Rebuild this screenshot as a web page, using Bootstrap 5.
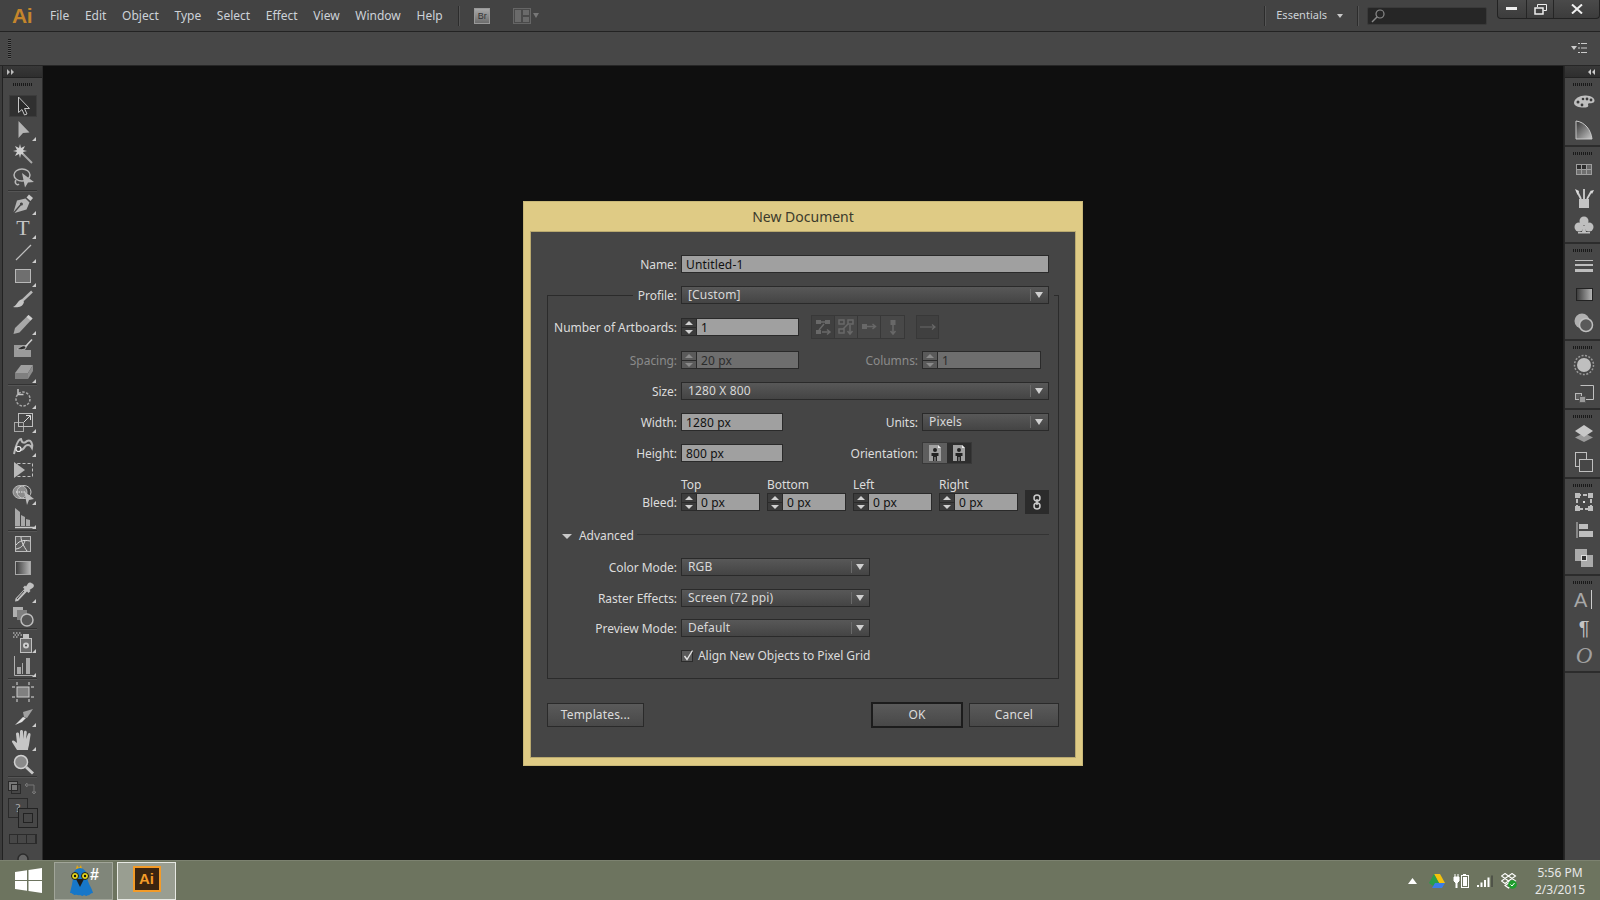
<!DOCTYPE html>
<html lang="en">
<head>
<meta charset="UTF-8">
<title>Adobe Illustrator - New Document</title>
<link href="https://cdn.jsdelivr.net/npm/bootstrap@5.3.0/dist/css/bootstrap.min.css" rel="stylesheet">
<style>
    html, body { height: 900px; overflow: hidden; }
    body { width: 1600px; background: #0f0f0f; font-family: "Noto Sans", sans-serif; font-size: 12px; color: #d0d0d0; position: relative; }

    .menubar { height: 32px; background: #434343; border-bottom: 1px solid #232323; position: relative; }
    .ai-logo { width: 50px; font: bold 21px "Liberation Sans", sans-serif; color: #c4852c; padding-left: 12px; letter-spacing: -.5px; }
    .menu-item { color: #cdd2d8; margin-right: 15.7px; line-height: 30px; }
    .vsep { width: 2px; height: 20px; background: #2c2c2c; border-right: 1px solid #555; }
    .br-ico { width: 16px; height: 16px; background: linear-gradient(#a8a8a8, #6c6c6c); border: 1px solid #999; color: #333; font: 9px "Liberation Sans", sans-serif; text-align: center; line-height: 14px; margin: 0 23px 0 14px; }
    .essentials { color: #cdd2d8; font-size: 11px; margin: 0 10px 0 10px; }
    .ess-caret { margin-right: 14px; }
    .search-box { width: 120px; height: 18px; background: #262626; border: 1px solid #3a3a3a; border-radius: 2px; margin: 0 10px 0 8px; padding-left: 3px; }
    .win-btns { width: 103px; height: 19px; background: linear-gradient(#4a4a4a, #3c3c3c); border: 1px solid #222; border-top: 0; border-radius: 0 0 4px 4px; margin: 0 0 12px 0; }
    .win-btns > div { height: 100%; border-left: 1px solid #252525; }
    .win-btns > div:first-child { border-left: 0; }
    .win-min { width: 28px; }
    .win-max { width: 27px; }
    .ctrlbar { height: 34px; background: #474747; border-bottom: 1px solid #262626; padding: 0 13px 0 8px; }
    .grip-v { width: 3px; height: 20px; background: repeating-linear-gradient(#191919 0 1px, #5a5a5a 1px 2px); }
    .grip-h { width: 19px; height: 3px; background: repeating-linear-gradient(90deg, #191919 0 1px, #474747 1px 2px); margin: 5px auto 0; }

    .workspace { height: 794px; }
    .edge-left { width: 3px; background: #3b3b3b; border-right: 1px solid #222; }
    .tool-panel { width: 40px; background: #474747; border-right: 1px solid #2b2b2b; overflow: hidden; }
    .panel-head { height: 12px; background: linear-gradient(#383838, #2e2e2e); border-bottom: 1px solid #222; color: #bbb; }
    .tool { height: 24px; width: 39px; display: flex; justify-content: center; align-items: center; position: relative; }
    .tool-on { background: #303030; border: 1px solid #3c3c3c; width: 28px; height: 22px; margin: 9px auto 1px; }
    .tool.more::after { content: ""; position: absolute; right: 6px; bottom: 1px; border: 2px solid transparent; border-right-color: #ccc; border-bottom-color: #ccc; }
    .tool-sep { background: #333; border-bottom: 1px solid #555; margin: 0 5px; box-sizing: content-box; height: 1px; }
    .swatches { height: 20px; padding: 0 5px; }
    .fillstroke { height: 32px; position: relative; margin: 0 5px; }
    .fill-box { width: 20px; height: 20px; border: 1px solid #2a2a2a; position: absolute; left: 0; top: 0; color: #aaa; font-size: 11px; line-height: 18px; text-align: center; }
    .stroke-box { width: 20px; height: 20px; border: 1px solid #222; position: absolute; left: 10px; top: 10px; background: #474747; }
    .stroke-box::after { content: ""; position: absolute; left: 4px; top: 4px; width: 10px; height: 10px; border: 1px solid #222; }
    .modes { width: 28px; height: 10px; margin: 4px auto 0; border: 1px solid #2b2b2b; display: flex; }
    .modes i { flex: 1; border-right: 1px solid #2b2b2b; }
    .draw-behind { display: block; margin: 9px auto 0; }
    .right-panel { width: 36px; background: #474747; border-left: 1px solid #262626; }
    .pgroup { border-bottom: 2px solid #2c2c2c; }
    .pg2 { padding-bottom: 1px; }
    .pg2 .grip-h { margin-bottom: 2px; }
    .pg3 { padding-bottom: 2px; }
    .pg3 .grip-h { margin-bottom: 1px; }
    .rtool { height: 28px; display: flex; justify-content: center; align-items: center; padding-left: 3px; }
    .canvas-edge { width: 1px; background: #202020; }

    .taskbar { height: 40px; background: #6d745f; border-top: 1px solid #7c8270; }
    .win-logo { margin: 0 12px 0 15px; }
    .task-btn { width: 59px; height: 38px; background: #80867a; border: 1px solid #a1a599; margin-right: 4px; }
    .task-btn.task-on { background: #999e91; border-color: #e6e8e2; }
    .ai-task { width: 28px; height: 26px; background: #3b2410; border: 2px solid #f39b28; color: #f39b28; font: bold 15px "Liberation Sans", sans-serif; text-align: center; line-height: 22px; margin-bottom: 3px; }
    .clock { width: 80px; text-align: center; color: #e8e8e8; font-size: 12px; line-height: 17px; }
    .tray-svg { margin-right: 8px; }
    .tray-arrow { margin-right: 12px; }
    .tray-last { margin-right: 3px; }

    .dlg { position: absolute; left: 523px; top: 201px; width: 560px; height: 565px; background: #dfcb85; border: 1px solid #c9b878; padding: 0 6px 6px; }
    .dlg-title { height: 29px; line-height: 30px; text-align: center; color: #3c3a2c; font-size: 14px; }
    .dlg-body { height: 527px; background: #454545; border: 1px solid #b9a96f; padding: 23px 16px 0; font-family: "Noto Sans", sans-serif; color: #dcdcdc; letter-spacing: -.05px; }
    .frow { height: 18px; display: flex; align-items: center; }
    .lbl { width: 130px; text-align: right; margin-right: 4px; white-space: nowrap; flex: none; padding-top: 2px; }
    .fset .lbl { width: 129px; }
    .fset .lbl.lbl-auto { width: auto; margin-left: auto; }
    .dim { color: #8b8b8b; }
    .dlg .form-control { height: 18px; min-height: 0; background: #a0a0a0; border: 1px solid #2a2a2a; border-radius: 0; padding: 0 4px; font-size: 12px; color: #111; line-height: 16px; box-shadow: none; letter-spacing: .15px; font-family: "Noto Sans", sans-serif; }
    .dlg .form-control:disabled { background: #6e6e6e; color: #2c2c2c; opacity: 1; }
    .w-name { width: 368px; }
    .dlg .w-dim { width: 102px; }
    .sel { height: 18px; background: linear-gradient(#585858, #444); border: 1px solid #2a2a2a; color: #d8d8d8; display: flex; padding-left: 6px; align-items: center; }
    .sel span { flex-grow: 1; letter-spacing: .15px; }
    .sel b { width: 17px; height: 12px; border-left: 1px solid #6a6a6a; position: relative; margin-right: 1px; }
    .sel b::after { content: ""; position: absolute; left: 4px; top: 3px; border: 4px solid transparent; border-top: 6px solid #d0d0d0; border-bottom: 0; }
    .sel-full { width: 368px; }
    .sel-short { width: 127px; }
    .sel-mid { width: 189px; }
    .spin { display: flex; height: 18px; }
    .spin-btn { width: 15px; flex: none; background: #3c3c3c; border: 1px solid #2a2a2a; border-right: 0; display: flex; flex-direction: column; }
    .spin-btn i { flex: 1; position: relative; display: block; }
    .spin-btn i + i { border-top: 1px solid #2a2a2a; }
    .spin-btn i::after { content: ""; position: absolute; left: 3px; top: 2px; border: 4px solid transparent; border-bottom: 4px solid #d0d0d0; border-top: 0; }
    .spin-btn i + i::after { border-top: 4px solid #d0d0d0; border-bottom: 0; }
    .spin-off .spin-btn { background: #5a5a5a; }
    .spin-off .spin-btn i::after { border-bottom-color: #8a8a8a; border-top-color: #8a8a8a; }
    .spin .form-control { width: 103px; }
    .spin-small .form-control { width: 64px; }
    .spin-col { width: 119px; }
    .spin-col .form-control { width: 104px; }
    .arr-group { display: flex; border: 1px solid #383838; margin-left: 12px; height: 24px; }
    .arr-group div { width: 23px; border-right: 1px solid #383838; background: #484848; display: flex; align-items: center; justify-content: center; }
    .arr-group div:last-child { border-right: 0; }
    .arr-group div:first-child { background: #404040; }
    .arr-single { margin-left: 11px; }
    .arr-single div { width: 21px; }

    .fset { border: 1px solid #2b2b2b; height: 384px; margin-top: 22px; padding-right: 9px; }
    .profile-row { margin-top: -10px; margin-left: 85px; background: #454545; padding-right: 5px; padding-left: 4px; width: max-content; }
    .fset .profile-row .lbl { width: 40px; }
    .mt-12 { margin-top: 12px; }
    .mt-14 { margin-top: 14px; }
    .mt-15 { margin-top: 15px; }
    .mt-13 { margin-top: 13px; }
    .orient { display: flex; height: 22px; border: 1px solid #383838; width: 50px; }
    .orient div { width: 24px; display: flex; align-items: center; justify-content: center; background: #5e5e5e; }
    .orient div + div { background: #2d2d2d; }
    .orient-gap { width: 77px; }
    .bleed-heads { padding-left: 133px; height: 14px; margin-top: 16px; line-height: 14px; }
    .bleed-heads span { width: 86px; display: block; flex: none; }
    .bleed-row { height: 24px; margin-top: -2px; }
    .bleed-row .spin { margin-right: 7px; }
    .link-btn { width: 24px; height: 24px; background: #2b2b2b; display: flex; align-items: center; justify-content: center; }
    .adv-row { margin-top: 13px; padding-left: 14px; height: 18px; }
    .adv-row i { border: 5px solid transparent; border-top: 5px solid #c8c8c8; border-bottom: 0; margin-right: 7px; }
    .adv-row hr { flex-grow: 1; margin: 0 0 3px 3px; border: 0; border-top: 1px solid #333; opacity: 1; }
    .chk-row { margin-top: 10px; margin-left: 133px; }
    .chk { width: 12px; height: 12px; background: #5a5a5a; border: 1px solid #2b2b2b; margin-right: 5px; position: relative; }
    .chk svg { position: absolute; left: 0; top: -2px; }
    .dlg-foot { margin-top: 24px; }
    .dlg .btn { height: 24px; background: linear-gradient(#5a5a5a, #484848); border: 1px solid #2a2a2a; border-radius: 0; color: #dcdcdc; font-size: 12px; padding: 0; line-height: 22px; letter-spacing: .15px; }
    .btn-tpl { width: 97px; }
    .dlg .btn-ok { width: 92px; height: 26px; border: 2px solid #1c1c1c; margin-top: -1px; margin-right: 6px; }
    .btn-can { width: 90px; }
</style>
</head>
<body>
<svg width="0" height="0" class="position-absolute">
    <defs>
        <linearGradient id="gr"><stop offset="0" stop-color="#3a3a3a"/><stop offset="1" stop-color="#b8b8b8"/></linearGradient>
        <linearGradient id="wedge" x1="0" y1="0" x2="1" y2="1"><stop offset="0" stop-color="#333"/><stop offset="1" stop-color="#c8c8c8"/></linearGradient>
        <symbol id="t-sel" viewBox="0 0 24 24"><path d="M7.5 3v15.5l3.5-3 2.5 5.5 2.5-1-2.5-5.500h5z" fill="#2a2a2a" stroke="#c6c6c6"/></symbol>
        <symbol id="t-dir" viewBox="0 0 24 24"><path d="M7.500 3v17l4.500-5 6.500-.5z" fill="#b4b4b4"/></symbol>
        <symbol id="t-wand" viewBox="0 0 24 24"><path d="M9 2l1 4 4-2-2 4 4 1-4 1 2 4-4-2-1 4-1-4-4 2 2-4-4-1 4-1-2-4 4 2z" fill="#cfcfcf"/><path d="M12 12l9 9" stroke="#a8a8a8" stroke-width="2"/></symbol>
        <symbol id="t-lasso" viewBox="0 0 24 24"><ellipse cx="11" cy="9" rx="8" ry="6" fill="none" stroke="#b8b8b8" stroke-width="1.500"/><path d="M5 14c-2 3 1 6 3 4" fill="none" stroke="#b8b8b8" stroke-width="1.500"/><path d="M11 7l12 9-6 .5-3 5z" fill="#b8b8b8"/></symbol>
        <symbol id="t-pen" viewBox="0 0 24 24"><path d="M18 2.500l4 3.500-2.500 3-4-3.500z" fill="#c8c8c8"/><path d="M14.500 6.500l4 4-3 7-12 3.500 6.500-7.500a1.500 1.500 0 1 0-1-1l-6.500 7.500 3.500-11.500z" fill="#b4b4b4"/></symbol>
        <symbol id="t-line" viewBox="0 0 24 24"><path d="M5 20L20 5" stroke="#c0c0c0" stroke-width="1.200"/></symbol>
        <symbol id="t-rect" viewBox="0 0 24 24"><rect x="4.500" y="5.500" width="15" height="13" fill="#6f6f6f" stroke="#b8b8b8"/></symbol>
        <symbol id="t-brush" viewBox="0 0 24 24"><path d="M21 3.500L11 13" stroke="#b8b8b8" stroke-width="2.500"/><path d="M11 11.500c-4 0-5 6-9 7.500 4 1 10 0 11-5z" fill="#c4c4c4"/></symbol>
        <symbol id="t-pencil" viewBox="0 0 24 24"><path d="M17.500 3l4 3.500-13 14-6 1.500 1.500-6z" fill="#a8a8a8"/><path d="M17.500 3l4 3.500-2 2-4-3.500z" fill="#d0d0d0"/></symbol>
        <symbol id="t-blob" viewBox="0 0 24 24"><path d="M3 9h14l-3 5h6v7H3z" fill="#9a9a9a"/><path d="M21 3.500L14 11" stroke="#d0d0d0" stroke-width="1.500"/><path d="M14 10c-3-1-5 2-8 3 3 1 7 1 9-1z" fill="#2c2c2c" stroke="#ccc" stroke-width=".6"/></symbol>
        <symbol id="t-eraser" viewBox="0 0 24 24"><path d="M10 5h12l-5 8H4z" fill="#9f9f9f"/><path d="M4 13h13v6H4z" fill="#7f7f7f"/><path d="M17 13l5-8v6l-5 8z" fill="#8c8c8c"/></symbol>
        <symbol id="t-rot" viewBox="0 0 24 24"><circle cx="12" cy="13" r="7" fill="none" stroke="#a8a8a8" stroke-width="1.500" stroke-dasharray="2.500 1.500"/><path d="M7 3v5.500h5.500" fill="none" stroke="#c4c4c4" stroke-width="1.500"/></symbol>
        <symbol id="t-scale" viewBox="0 0 24 24"><rect x="3.500" y="12.500" width="9" height="9" fill="#4a4a4a" stroke="#a8a8a8"/><rect x="7.500" y="3.500" width="14" height="13" fill="none" stroke="#bdbdbd"/><path d="M13 12l6-6M15 5.500h4.500V10" fill="none" stroke="#ddd"/></symbol>
        <symbol id="t-warp" viewBox="0 0 24 24"><path d="M3 20c2-9 4-15 7-15 1 5 4 4 6 2 4-2 6 3 5 7-2-4-6-4-8 0-1 2-3 2-5 2" fill="none" stroke="#b8b8b8" stroke-width="2"/><circle cx="7.500" cy="15" r="2.500" fill="#454545" stroke="#eee" stroke-width="1.200"/></symbol>
        <symbol id="t-free" viewBox="0 0 24 24"><rect x="6.500" y="5.500" width="15" height="13" fill="none" stroke="#c0c0c0" stroke-dasharray="3 2"/><path d="M3 4l11 8-11 8z" fill="#b8b8b8"/></symbol>
        <symbol id="t-shape" viewBox="0 0 24 24"><ellipse cx="9" cy="10" rx="7" ry="6.500" fill="#8c8c8c" stroke="#b8b8b8"/><ellipse cx="13" cy="10" rx="7" ry="6.500" fill="none" stroke="#c8c8c8"/><path d="M5 10h9" stroke="#eee" stroke-dasharray="1.500 1"/><path d="M13 9l10 8-5 1-2 5z" fill="#bcbcbc"/></symbol>
        <symbol id="t-persp" viewBox="0 0 24 24"><path d="M4 2l5 4v14H4zM10 9l4 2v9h-4zM15 13l4 1v6h-4z" fill="#a8a8a8"/><path d="M4 21.500h19" stroke="#ccc" stroke-width="1.500"/></symbol>
        <symbol id="t-mesh" viewBox="0 0 24 24"><rect x="4.500" y="4.500" width="15" height="15" fill="#5e5e5e" stroke="#bbb"/><path d="M5 13c4-5 8-5 14-4M5 17c5-1 7-3 9-8M10 5c0 4 3 10 6 14" fill="none" stroke="#ddd"/></symbol>
        <symbol id="t-grad" viewBox="0 0 24 24"><rect x="4.500" y="5.500" width="15" height="13" fill="url(#gr)" stroke="#a8a8a8"/></symbol>
        <symbol id="t-drop" viewBox="0 0 24 24"><path d="M21 3.500a2.500 2.500 0 0 0-4 0l-2 3-1-1-2 2 1.500 1.500-9 9.500-.5 3 3-.5 9-9.500 1.500 1.500 2-2-1-1 3-2a2.500 2.500 0 0 0 0-4.500z" fill="#c0c0c0"/><path d="M13 11l-7 8" stroke="#454545"/></symbol>
        <symbol id="t-blend" viewBox="0 0 24 24"><rect x="2" y="3" width="10" height="10" fill="#b0b0b0"/><rect x="6" y="6" width="10" height="10" fill="#808080"/><circle cx="16" cy="16" r="6" fill="#555" stroke="#bdbdbd" stroke-width="1.500"/></symbol>
        <symbol id="t-sym" viewBox="0 0 24 24"><rect x="9.500" y="8.500" width="11" height="14" fill="#6a6a6a" stroke="#c0c0c0"/><rect x="12" y="4" width="6" height="4" fill="#c0c0c0"/><circle cx="15" cy="15.500" r="3" fill="#ccc"/><circle cx="15" cy="15.500" r="1" fill="#444"/><path d="M2 3h1.500M5 3h1.500M8 3h1.500M3.500 5H5M6.500 5H8M9.500 5H11M2 7h1.500M5 7h1.500" stroke="#ddd"/></symbol>
        <symbol id="t-graph" viewBox="0 0 24 24"><path d="M3.500 2v19.500h19" fill="none" stroke="#b0b0b0"/><path d="M6 13h4v7H6zM11 9h1v11h-1zM15 4h4v16h-4z" fill="#a8a8a8"/></symbol>
        <symbol id="t-board" viewBox="0 0 24 24"><rect x="6" y="7" width="12" height="10" fill="#808080" stroke="#ccc"/><path d="M6 2v3M18 2v3M6 19v3M18 19v3M1 7h3M20 7h3M1 17h3M20 17h3" stroke="#ddd"/></symbol>
        <symbol id="t-slice" viewBox="0 0 24 24"><path d="M4 21l8-8 3 1-4 4z" fill="#e0e0e0"/><path d="M12 8l10-3-6 9-3-1z" fill="#a0a0a0"/></symbol>
        <symbol id="t-hand" viewBox="0 0 24 24"><path d="M6 22l-5-8c-.5-1.500 1.500-2 2.500-1L6 15 5 6c0-2 2.500-2 3-.5L9 11V3.500c0-2 3-2 3 0V11l1-7c.3-2 3-1.500 2.800.500L15 11l2-5c.7-2 3-1 2.500 1L18 17c-.3 2-1 3-1 5z" fill="#c6c6c6"/></symbol>
        <symbol id="t-zoom" viewBox="0 0 24 24"><circle cx="10" cy="10" r="6.500" fill="#8a8a8a" stroke="#d0d0d0" stroke-width="1.500"/><path d="M15 15l7 6.500" stroke="#c8c8c8" stroke-width="3"/></symbol>

        <symbol id="r-palette" viewBox="0 0 24 24"><path d="M2 13c0-5 7-8 12-7.500 5 .3 9 2.500 8.500 5.500-.5 2.500-4 2-6 2.500-1.500.5 1 2.500-1 3.500-4 1.500-13.500 0-13.500-4z" fill="#bfbfbf"/><g fill="#3b3b3b"><circle cx="6" cy="12" r="1.500"/><circle cx="10" cy="15" r="1.400"/><circle cx="15" cy="9" r="1.400"/><circle cx="19" cy="10" r="1.400"/><circle cx="11" cy="9" r="1.300"/></g></symbol>
        <symbol id="r-wedge" viewBox="0 0 24 24"><path d="M4 3c9 1 15 9 16 18H4z" fill="url(#wedge)" stroke="#c8c8c8"/></symbol>
        <symbol id="r-grid" viewBox="0 0 24 24"><rect x="4" y="6" width="16" height="11" fill="#9e9e9e"/><path d="M5 7h4v4H5zM10 7h4v4h-4z" fill="#2d2d2d"/><path d="M15 7h4v4h-4z" fill="#666"/><path d="M5 12h4v4H5zM10 12h4v4h-4zM15 12h4v4h-4z" fill="#6e6e6e"/></symbol>
        <symbol id="r-brushes" viewBox="0 0 24 24"><rect x="7" y="13" width="10" height="9" fill="#c4c4c4"/><path d="M9 13L5.500 6M12 13V3M15 13l4-7" stroke="#cfcfcf" stroke-width="1.800"/><path d="M3 3l4 2-1.500 4zM18 5l4-1-2 4z" fill="#ddd"/></symbol>
        <symbol id="r-club" viewBox="0 0 24 24"><circle cx="12" cy="7" r="4.500" fill="#bfbfbf"/><circle cx="7" cy="13" r="4.500" fill="#bfbfbf"/><circle cx="17" cy="13" r="4.500" fill="#bfbfbf"/><path d="M11 12h2l1 6h4v1.500H6V18h4z" fill="#bfbfbf"/></symbol>
        <symbol id="r-lines" viewBox="0 0 24 24"><path d="M3 5.500h18" stroke="#bdbdbd"/><path d="M3 10h18" stroke="#bdbdbd" stroke-width="2"/><path d="M3 15.500h18" stroke="#bdbdbd" stroke-width="3"/></symbol>
        <symbol id="r-grad" viewBox="0 0 24 24"><rect x="4.500" y="5.500" width="16" height="12" fill="url(#gr)" stroke="#222"/></symbol>
        <symbol id="r-trans" viewBox="0 0 24 24"><circle cx="10" cy="10" r="7.500" fill="#b0b0b0"/><circle cx="14" cy="14" r="6.500" fill="#5a5a5a" stroke="#bfbfbf" stroke-width="1.500"/></symbol>
        <symbol id="r-appear" viewBox="0 0 24 24"><circle cx="12" cy="12" r="9.500" fill="none" stroke="#9a9a9a" stroke-width="1.500" stroke-dasharray="2 1.500"/><circle cx="12" cy="12" r="7" fill="#bfbfbf"/></symbol>
        <symbol id="r-styles" viewBox="0 0 24 24"><path d="M8.500 4.500h13v14h-8" fill="none" stroke="#c0c0c0"/><rect x="3.500" y="12.500" width="6" height="6" fill="#5c5c5c" stroke="#b8b8b8"/><rect x="7.500" y="15.500" width="6" height="6" fill="#9a9a9a" stroke="#555"/></symbol>
        <symbol id="r-layers" viewBox="0 0 24 24"><path d="M12 14l9 4.500-9 4.500-9-4.500z" fill="#9a9a9a" transform="translate(0 -3)"/><path d="M12 3l9 6-9 6-9-6z" fill="#c8c8c8"/></symbol>
        <symbol id="r-boards" viewBox="0 0 24 24"><rect x="3.500" y="2.500" width="11" height="14" fill="none" stroke="#c0c0c0"/><rect x="7.500" y="9.500" width="13" height="12" fill="#474747" stroke="#c0c0c0"/></symbol>
        <symbol id="r-transf" viewBox="0 0 24 24"><rect x="5" y="5" width="14" height="14" fill="none" stroke="#bdbdbd" stroke-width="2" stroke-dasharray="4 2"/><path d="M3 3h5v5H3zM16 3h5v5h-5zM3 16h5v5H3zM16 16h5v5h-5z" fill="#bdbdbd"/><rect x="11" y="11" width="2" height="2" fill="#ddd"/></symbol>
        <symbol id="r-align" viewBox="0 0 24 24"><path d="M5 4v16" stroke="#c8c8c8"/><rect x="7" y="6" width="9" height="5" fill="#bdbdbd"/><rect x="7" y="13" width="14" height="6" fill="#bdbdbd"/></symbol>
        <symbol id="r-path" viewBox="0 0 24 24"><rect x="3" y="3" width="12" height="12" fill="#aaa"/><rect x="9" y="9" width="12" height="12" fill="#aaa"/><rect x="9.500" y="9.500" width="5" height="5" fill="#333" stroke="#ddd"/></symbol>

        <symbol id="a-1" viewBox="0 0 20 20"><path d="M3 3h5v4H3zM12 3h5v4h-5zM3 13h5v4H3z" fill="#686868"/><path d="M8 5h4M11 7l-5 6M9 15h7M14 12.500l3 2.500-3 2.500" fill="none" stroke="#686868" stroke-width="1.500"/></symbol>
        <symbol id="a-2" viewBox="0 0 20 20"><path d="M3 3h5v4H3zM12 3h5v4h-5zM3 12h5v4H3z" fill="none" stroke="#686868" stroke-width="1.500"/><path d="M12 7l-5 5M14 8v9M11.500 14l2.500 3 2.500-3" fill="none" stroke="#686868" stroke-width="1.500"/></symbol>
        <symbol id="a-3" viewBox="0 0 20 20"><path d="M3 7h5v5H3z" fill="#686868"/><path d="M8 9.500h8M13.500 7l3 2.500-3 2.500" fill="none" stroke="#686868" stroke-width="1.500"/></symbol>
        <symbol id="a-4" viewBox="0 0 20 20"><path d="M7.500 3h5v5h-5z" fill="#686868"/><path d="M10 8v9M7.500 14l2.500 3 2.500-3" fill="none" stroke="#686868" stroke-width="1.500"/></symbol>
        <symbol id="a-5" viewBox="0 0 20 20"><path d="M2 10h15M14 7.500l3 2.500-3 2.500" fill="none" stroke="#686868" stroke-width="1.200"/></symbol>
        <symbol id="o-doc" viewBox="0 0 16 18"><path d="M2 1h9l3 3v13H2z" fill="#a0a0a0"/><path d="M11 1l3 3h-3z" fill="#eee"/><circle cx="8" cy="6" r="2" fill="#222"/><path d="M4.500 9h7v3H10v5H8.600v-4H7.400v4H6v-5H4.500z" fill="#222"/></symbol>
    </defs>
</svg>

<header class="menubar d-flex align-items-center">
    <div class="ai-logo">Ai</div>
    <div class="menu-item">File</div>
    <div class="menu-item">Edit</div>
    <div class="menu-item">Object</div>
    <div class="menu-item">Type</div>
    <div class="menu-item">Select</div>
    <div class="menu-item">Effect</div>
    <div class="menu-item">View</div>
    <div class="menu-item">Window</div>
    <div class="menu-item">Help</div>
    <div class="vsep"></div>
    <div class="br-ico">Br</div>
    <svg width="27" height="16" viewBox="0 0 27 16"><rect x=".5" y=".5" width="17" height="15" fill="#4a4a4a" stroke="#666"/><rect x="2" y="2" width="6" height="12" fill="#6a6a6a"/><rect x="10" y="2" width="6" height="5" fill="#6a6a6a"/><rect x="10" y="9" width="6" height="5" fill="#6a6a6a"/><path d="M20 5h6l-3 5z" fill="#777"/></svg>
    <div class="ms-auto vsep"></div>
    <div class="essentials">Essentials</div>
    <svg width="6" height="4" viewBox="0 0 6 4" class="ess-caret"><path d="M0 0h6L3 4z" fill="#c8c8c8"/></svg>
    <div class="vsep"></div>
    <div class="search-box d-flex align-items-center">
        <svg width="15" height="15" viewBox="0 0 15 15"><circle cx="9" cy="6" r="4" fill="none" stroke="#8a8a8a" stroke-width="1.200"/><path d="M6 9l-5 5" stroke="#8a8a8a" stroke-width="1.500"/></svg>
    </div>
    <div class="win-btns d-flex">
        <div class="win-min d-flex align-items-center justify-content-center"><svg width="12" height="4"><rect width="11" height="3" fill="#eee"/></svg></div>
        <div class="win-max d-flex align-items-center justify-content-center"><svg width="13" height="11" viewBox="0 0 13 11"><path d="M3.500 3V.5h9v6H9.500" fill="none" stroke="#eee"/><rect x="1" y="4" width="8" height="6" fill="none" stroke="#eee" stroke-width="1.500"/></svg></div>
        <div class="d-flex align-items-center justify-content-center flex-grow-1"><svg width="12" height="10" viewBox="0 0 12 10"><path d="M1 .5l10 9M11 .5l-10 9" stroke="#f0f0f0" stroke-width="2"/></svg></div>
    </div>
</header>

<div class="ctrlbar d-flex align-items-center justify-content-between">
    <div class="grip-v"></div>
    <svg width="16" height="11" viewBox="0 0 16 11"><path d="M0 3h6L3 7z" fill="#ccc"/><path d="M7 .5h2M7 5h2M7 9.500h2M10 .5h6M10 5h6M10 9.500h6" stroke="#ccc"/></svg>
</div>

<div class="workspace d-flex">
    <div class="edge-left"></div>
    <nav class="tool-panel">
        <div class="panel-head d-flex align-items-center ps-1"><svg width="8" height="6" viewBox="0 0 8 6"><path d="M0 0l3 3-3 3zM4 0l3 3-3 3z" fill="#bbb"/></svg></div>
        <div class="grip-h"></div>
        <div class="tool tool-on"><svg width="24" height="24"><use href="#t-sel"/></svg></div>
        <div class="tool more"><svg width="24" height="24"><use href="#t-dir"/></svg></div>
        <div class="tool"><svg width="24" height="24"><use href="#t-wand"/></svg></div>
        <div class="tool"><svg width="24" height="24"><use href="#t-lasso"/></svg></div>
        <div class="tool-sep"></div>
        <div class="tool more"><svg width="24" height="24"><use href="#t-pen"/></svg></div>
        <div class="tool more"><svg width="24" height="24" viewBox="0 0 24 24"><text x="12" y="19" text-anchor="middle" font-family="Liberation Serif" font-size="22" fill="#c4c4c4">T</text></svg></div>
        <div class="tool more"><svg width="24" height="24"><use href="#t-line"/></svg></div>
        <div class="tool more"><svg width="24" height="24"><use href="#t-rect"/></svg></div>
        <div class="tool"><svg width="24" height="24"><use href="#t-brush"/></svg></div>
        <div class="tool more"><svg width="24" height="24"><use href="#t-pencil"/></svg></div>
        <div class="tool"><svg width="24" height="24"><use href="#t-blob"/></svg></div>
        <div class="tool more"><svg width="24" height="24"><use href="#t-eraser"/></svg></div>
        <div class="tool-sep"></div>
        <div class="tool more"><svg width="24" height="24"><use href="#t-rot"/></svg></div>
        <div class="tool more"><svg width="24" height="24"><use href="#t-scale"/></svg></div>
        <div class="tool more"><svg width="24" height="24"><use href="#t-warp"/></svg></div>
        <div class="tool"><svg width="24" height="24"><use href="#t-free"/></svg></div>
        <div class="tool more"><svg width="24" height="24"><use href="#t-shape"/></svg></div>
        <div class="tool more"><svg width="24" height="24"><use href="#t-persp"/></svg></div>
        <div class="tool-sep"></div>
        <div class="tool"><svg width="24" height="24"><use href="#t-mesh"/></svg></div>
        <div class="tool"><svg width="24" height="24"><use href="#t-grad"/></svg></div>
        <div class="tool more"><svg width="24" height="24"><use href="#t-drop"/></svg></div>
        <div class="tool"><svg width="24" height="24"><use href="#t-blend"/></svg></div>
        <div class="tool-sep"></div>
        <div class="tool more"><svg width="24" height="24"><use href="#t-sym"/></svg></div>
        <div class="tool more"><svg width="24" height="24"><use href="#t-graph"/></svg></div>
        <div class="tool-sep"></div>
        <div class="tool"><svg width="24" height="24"><use href="#t-board"/></svg></div>
        <div class="tool more"><svg width="24" height="24"><use href="#t-slice"/></svg></div>
        <div class="tool more"><svg width="24" height="24"><use href="#t-hand"/></svg></div>
        <div class="tool"><svg width="24" height="24"><use href="#t-zoom"/></svg></div>
        <div class="tool-sep"></div>
        <div class="swatches d-flex justify-content-between align-items-center">
            <svg width="14" height="14" viewBox="0 0 14 14"><rect x=".5" y=".5" width="9" height="9" fill="#777" stroke="#2a2a2a"/><rect x="3.500" y="3.500" width="9" height="9" fill="none" stroke="#2a2a2a"/></svg>
            <svg width="12" height="12" viewBox="0 0 12 12"><path d="M2 3h7v7M0 3l2-2v4zM9 12l-2-2h4z" fill="none" stroke="#777"/></svg>
        </div>
        <div class="fillstroke">
            <div class="fill-box">?</div>
            <div class="stroke-box"></div>
        </div>
        <div class="modes"><i></i><i></i><i></i></div>
        <svg class="draw-behind" width="12" height="12" viewBox="0 0 12 12"><circle cx="6" cy="6" r="5" fill="#666" stroke="#2b2b2b" stroke-width="1.500"/></svg>
    </nav>
    <div class="flex-grow-1"></div>
    <div class="canvas-edge"></div>
    <aside class="right-panel">
        <div class="panel-head d-flex align-items-center justify-content-end pe-1"><svg width="8" height="6" viewBox="0 0 8 6"><path d="M3 0L0 3l3 3zM7 0L4 3l3 3z" fill="#ccc"/></svg></div>
        <div class="pgroup pg2"><div class="grip-h"></div>
            <div class="rtool"><svg width="24" height="24"><use href="#r-palette"/></svg></div>
            <div class="rtool"><svg width="24" height="24"><use href="#r-wedge"/></svg></div>
        </div>
        <div class="pgroup pg3"><div class="grip-h"></div>
            <div class="rtool"><svg width="24" height="24"><use href="#r-grid"/></svg></div>
            <div class="rtool"><svg width="24" height="24"><use href="#r-brushes"/></svg></div>
            <div class="rtool"><svg width="24" height="24"><use href="#r-club"/></svg></div>
        </div>
        <div class="pgroup pg3"><div class="grip-h"></div>
            <div class="rtool"><svg width="24" height="24"><use href="#r-lines"/></svg></div>
            <div class="rtool"><svg width="24" height="24"><use href="#r-grad"/></svg></div>
            <div class="rtool"><svg width="24" height="24"><use href="#r-trans"/></svg></div>
        </div>
        <div class="pgroup pg2"><div class="grip-h"></div>
            <div class="rtool"><svg width="24" height="24"><use href="#r-appear"/></svg></div>
            <div class="rtool"><svg width="24" height="24"><use href="#r-styles"/></svg></div>
        </div>
        <div class="pgroup pg2"><div class="grip-h"></div>
            <div class="rtool"><svg width="24" height="24"><use href="#r-layers"/></svg></div>
            <div class="rtool"><svg width="24" height="24"><use href="#r-boards"/></svg></div>
        </div>
        <div class="pgroup pg3"><div class="grip-h"></div>
            <div class="rtool"><svg width="24" height="24"><use href="#r-transf"/></svg></div>
            <div class="rtool"><svg width="24" height="24"><use href="#r-align"/></svg></div>
            <div class="rtool"><svg width="24" height="24"><use href="#r-path"/></svg></div>
        </div>
        <div class="pgroup pg3"><div class="grip-h"></div>
            <div class="rtool"><svg width="24" height="24" viewBox="0 0 24 24"><text x="2" y="20" font-family="Liberation Sans" font-size="20" fill="#a8a8a8">A</text><path d="M19.500 3v19" stroke="#ccc"/></svg></div>
            <div class="rtool"><svg width="24" height="24" viewBox="0 0 24 24"><text x="12" y="20" text-anchor="middle" font-family="Liberation Sans" font-size="20" fill="#c4c4c4">¶</text></svg></div>
            <div class="rtool"><svg width="24" height="24" viewBox="0 0 24 24"><text x="12" y="20" text-anchor="middle" font-family="Liberation Serif" font-style="italic" font-size="23" fill="#a0a0a0">O</text></svg></div>
        </div>
    </aside>
</div>

<footer class="taskbar d-flex align-items-center">
    <svg class="win-logo" width="27" height="25" viewBox="0 0 27 25"><path d="M0 4l12-1.700V12H0zM13.500 2L27 0v12H13.500zM0 13h12v9.700L0 21zM13.500 13H27v12l-13.500-2z" fill="#fff"/></svg>
    <div class="task-btn d-flex align-items-center justify-content-center">
        <svg width="36" height="34" viewBox="0 0 36 34">
            <path d="M11 1l2 3 2-3 1 4h-6z" fill="#e8a80f"/>
            <path d="M7 12c0-5 4-8 7-8s7 3 7 8c0 6 5 12 6 17-3 0-3 3-5 2-2 2-3 0-4 0-2 2-3 0-4 0-2 1-3-1-5 0-2 0-2-2-5-2 1-5 3-11 3-17z" fill="#1777c8"/>
            <circle cx="9" cy="12" r="3.500" fill="#e6d81c" stroke="#1a1a1a"/><circle cx="19" cy="12" r="3.500" fill="#e6d81c" stroke="#1a1a1a"/><circle cx="9" cy="12" r="1.200" fill="#111"/><circle cx="19" cy="12" r="1.200" fill="#111"/>
            <path d="M10 15h8l-4 8z" fill="#1c1c1c"/>
            <text x="24" y="16" font-family="Liberation Sans" font-weight="700" font-size="16" fill="#fff">#</text>
        </svg>
    </div>
    <div class="task-btn task-on d-flex align-items-center justify-content-center">
        <div class="ai-task">Ai</div>
    </div>
    <div class="ms-auto d-flex align-items-center">
        <svg class="tray-arrow" width="9" height="6" viewBox="0 0 9 6"><path d="M0 6l4.500-6L9 6z" fill="#fff"/></svg>
        <svg class="tray-svg" width="16" height="14" viewBox="0 0 16 14"><path d="M5 0h6l5 9h-6z" fill="#f4c20d"/><path d="M5 0l5 9-3 5-7-5z" fill="#2a9d4a"/><path d="M3 14l3-5h10l-3 5z" fill="#3b7de8"/></svg>
        <svg class="tray-svg" width="16" height="14" viewBox="0 0 16 14"><rect x="8.500" y="1.500" width="7" height="12" fill="none" stroke="#fff"/><rect x="10" y="3" width="4" height="9" fill="#fff"/><rect x="10" y="0" width="3" height="1" fill="#fff"/><path d="M1 3h5v4l-2 2v5H3V9L1 7zM2 0v3M5 0v3" fill="#fff" stroke="#fff"/></svg>
        <svg class="tray-svg" width="16" height="12" viewBox="0 0 16 12"><path d="M0 10h2v2H0zM3.500 7.500h2V12h-2zM7 5h2v7H7zM10.500 2.500h2V12h-2z" fill="#fff"/><path d="M14.500.5h1V12h-1z" fill="#333"/></svg>
        <svg class="tray-last" width="16" height="16" viewBox="0 0 16 16"><path d="M4 .5L7.500 3 4 5.500.5 3zM11 .5L14.500 3 11 5.500 7.500 3zM4 5.500L7.500 8 4 10.500.5 8zM11 5.500L14.500 8 11 10.500 7.500 8zM7.500 10l3.500 2.500-3.500 2.500L4 12.500z" fill="none" stroke="#fff" stroke-width="1.100"/><circle cx="11.500" cy="11.500" r="4.300" fill="#1f9e2e"/><path d="M9.500 11.500l1.500 1.500 2.500-3" fill="none" stroke="#fff"/></svg>
        <div class="clock"><div>5:56 PM</div><div>2/3/2015</div></div>
    </div>
</footer>

<section class="dlg">
    <div class="dlg-title">New Document</div>
    <div class="dlg-body">
        <div class="frow">
            <label class="lbl">Name:</label>
            <input class="form-control w-name" type="text" value="Untitled-1">
        </div>
        <div class="fset">
            <div class="frow profile-row">
                <label class="lbl">Profile:</label>
                <div class="sel sel-full"><span>[Custom]</span><b></b></div>
            </div>
            <div class="frow mt-14">
                <label class="lbl">Number of Artboards:</label>
                <div class="spin"><div class="spin-btn"><i></i><i></i></div><input class="form-control" type="text" value="1"></div>
                <div class="arr-group"><div><svg width="20" height="20"><use href="#a-1"/></svg></div><div><svg width="20" height="20"><use href="#a-2"/></svg></div><div><svg width="20" height="20"><use href="#a-3"/></svg></div><div><svg width="20" height="20"><use href="#a-4"/></svg></div></div>
                <div class="arr-group arr-single"><div><svg width="20" height="20"><use href="#a-5"/></svg></div></div>
            </div>
            <div class="frow mt-15">
                <label class="lbl dim">Spacing:</label>
                <div class="spin spin-off"><div class="spin-btn"><i></i><i></i></div><input class="form-control" type="text" value="20 px" disabled></div>
                <label class="lbl lbl-auto dim">Columns:</label>
                <div class="spin spin-off spin-col me-2"><div class="spin-btn"><i></i><i></i></div><input class="form-control" type="text" value="1" disabled></div>
            </div>
            <div class="frow mt-13">
                <label class="lbl">Size:</label>
                <div class="sel sel-full"><span>1280 X 800</span><b></b></div>
            </div>
            <div class="frow mt-13">
                <label class="lbl">Width:</label>
                <input class="form-control w-dim" type="text" value="1280 px">
                <label class="lbl lbl-auto">Units:</label>
                <div class="sel sel-short"><span>Pixels</span><b></b></div>
            </div>
            <div class="frow mt-13">
                <label class="lbl">Height:</label>
                <input class="form-control w-dim" type="text" value="800 px">
                <label class="lbl lbl-auto">Orientation:</label>
                <div class="orient"><div><svg width="16" height="18"><use href="#o-doc"/></svg></div><div><svg width="16" height="18"><use href="#o-doc"/></svg></div></div>
                <div class="orient-gap"></div>
            </div>
            <div class="d-flex bleed-heads">
                <span>Top</span><span>Bottom</span><span>Left</span><span>Right</span>
            </div>
            <div class="frow bleed-row spin-small">
                <label class="lbl">Bleed:</label>
                <div class="spin"><div class="spin-btn"><i></i><i></i></div><input class="form-control" type="text" value="0 px"></div>
                <div class="spin"><div class="spin-btn"><i></i><i></i></div><input class="form-control" type="text" value="0 px"></div>
                <div class="spin"><div class="spin-btn"><i></i><i></i></div><input class="form-control" type="text" value="0 px"></div>
                <div class="spin"><div class="spin-btn"><i></i><i></i></div><input class="form-control" type="text" value="0 px"></div>
                <div class="link-btn"><svg width="10" height="16" viewBox="0 0 10 16"><rect x="2" y="1" width="6" height="6" rx="3" fill="none" stroke="#ccc" stroke-width="1.500"/><rect x="2" y="9" width="6" height="6" rx="3" fill="none" stroke="#ccc" stroke-width="1.500"/><path d="M5 5v6" stroke="#ccc" stroke-width="1.500"/></svg></div>
            </div>
            <div class="frow adv-row">
                <i></i><span>Advanced</span><hr>
            </div>
            <div class="frow mt-13">
                <label class="lbl">Color Mode:</label>
                <div class="sel sel-mid"><span>RGB</span><b></b></div>
            </div>
            <div class="frow mt-13">
                <label class="lbl">Raster Effects:</label>
                <div class="sel sel-mid"><span>Screen (72 ppi)</span><b></b></div>
            </div>
            <div class="frow mt-12">
                <label class="lbl">Preview Mode:</label>
                <div class="sel sel-mid"><span>Default</span><b></b></div>
            </div>
            <div class="frow chk-row">
                <div class="chk"><svg width="12" height="13" viewBox="0 0 12 13"><path d="M2.500 7l2.500 3.500 5.500-9" fill="none" stroke="#e4e4e4" stroke-width="1.400"/></svg></div>
                <span>Align New Objects to Pixel Grid</span>
            </div>
        </div>
        <div class="dlg-foot d-flex align-items-start">
            <button class="btn btn-tpl" type="button">Templates...</button>
            <button class="btn btn-ok ms-auto" type="button">OK</button>
            <button class="btn btn-can" type="button">Cancel</button>
        </div>
    </div>
</section>

<script src="https://cdn.jsdelivr.net/npm/bootstrap@5.3.0/dist/js/bootstrap.bundle.min.js"></script>
</body>
</html>
